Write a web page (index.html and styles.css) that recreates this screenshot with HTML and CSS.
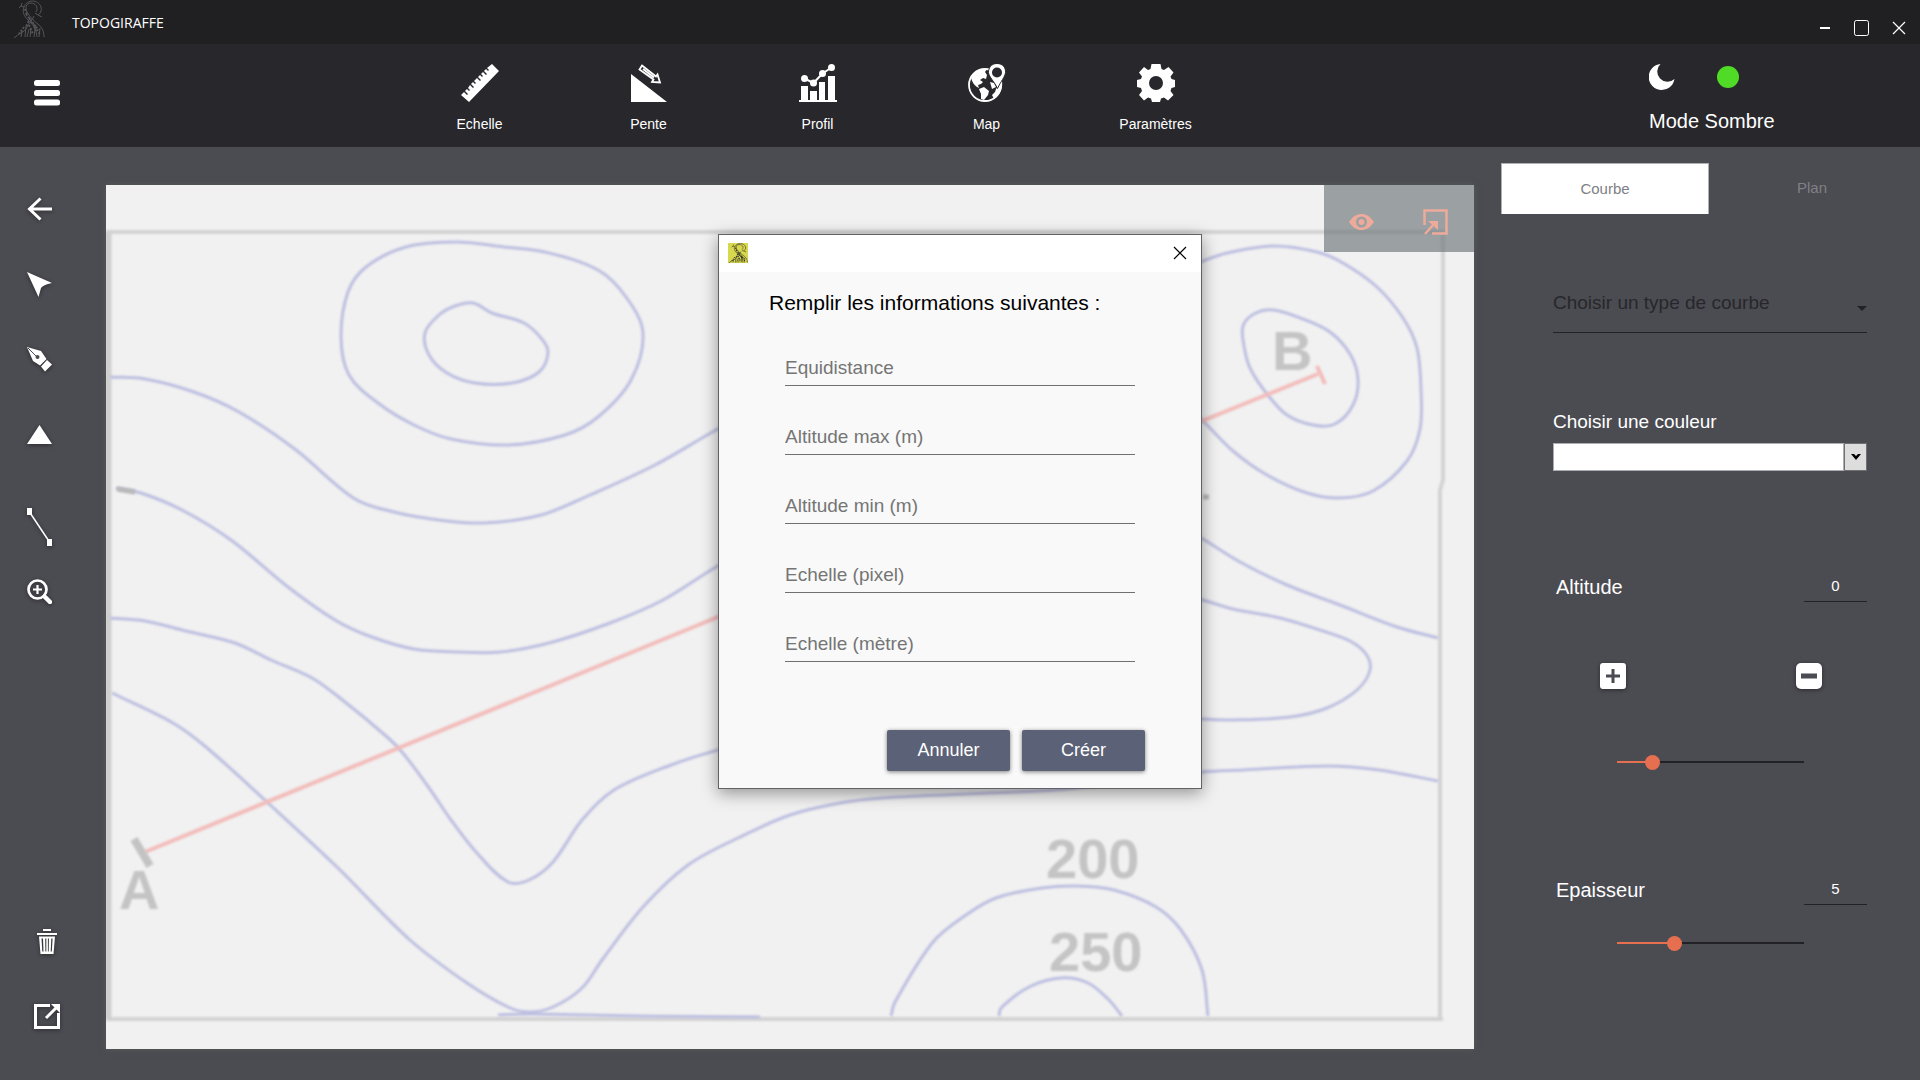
FILE: index.html
```html
<!DOCTYPE html>
<html lang="fr">
<head>
<meta charset="utf-8">
<title>TopoGiraffe</title>
<link rel="stylesheet" href="styles.css">
</head>
<body>
<svg class="defs" width="0" height="0" aria-hidden="true">
  <symbol id="giraffe" viewBox="0 0 32 38">
    <g fill="none" stroke="currentColor" stroke-width="1">
      <path d="M6 8l2-2 1-3M8 6l3 1c-2 5 0 9 4 13 5 5 8 8 9 17M11 7c3-8 14-8 17 0 1 4-1 7-3 8l4 2M25 15l-3-2M23 12c3-5-1-9-5-9-5 0-6 5-4 9 3 5 7 9 12 13 3 3 5 6 5 12"/>
      <path d="M21 16c-2 5-5 7-7 11-1 3-4 5-8 7l-5 4M13 26l-1 11M9 31l-1 6M16 29l-2 8M18 28l-1 9M22 29l-1 8M27 28l-1 9"/>
      <path stroke-width="2" stroke-dasharray="2 1.500" d="M13 14l11 14M17 18l-4 9M11 27l-5 7M16 25l4 9M21 27l6 7M12 9l2 6M18 22l8 8"/>
    </g>
  </symbol>
  <symbol id="close" viewBox="0 0 14 14"><path d="M1 1l12 12M13 1L1 13" fill="none" stroke="currentColor" stroke-width="1.200"/></symbol>
</svg>

<header>
  <div class="titlebar">
    <svg class="logo" width="32" height="38"><use href="#giraffe"/></svg>
    <h1>TOPOGIRAFFE</h1>
    <div class="window-buttons">
      <button type="button" aria-label="Réduire"><svg width="16" height="16" viewBox="0 0 16 16"><path d="M3 8h10" stroke="#fff" stroke-width="2"/></svg></button>
      <button type="button" aria-label="Agrandir"><svg width="16" height="16" viewBox="0 0 16 16"><rect x=".5" y=".5" width="14" height="15" rx="2" fill="none" stroke="#fff"/></svg></button>
      <button type="button" aria-label="Fermer"><svg width="14" height="14"><use href="#close"/></svg></button>
    </div>
  </div>
  <div class="toolbar">
    <button class="menu" type="button" aria-label="Menu"><svg width="26" height="26" viewBox="0 0 26 26"><g fill="#fff"><rect width="26" height="6" rx="2.500"/><rect y="10" width="26" height="6" rx="2.500"/><rect y="19.500" width="26" height="6" rx="2.500"/></g></svg></button>
    <nav>
      <button type="button"><svg width="38" height="38" viewBox="0 0 38 38"><path fill="#fff" d="M31 0l7 7L8 38l-8-7 3-3 3 3 1-1-3-3 2-2 2 2 1-1-2-2 2-3 3 3 1-1-3-3 2-2 2 2 1-1-2-2 3-3 3 3 1-1-3-3 2-2 2 2 1-1-2-2 2-2 3 3 1-1-3-3 2-2 2 2 1-1-2-2z"/></svg>Echelle</button>
      <button type="button"><svg width="38" height="38" viewBox="0 0 38 38"><path fill="#fff" d="M1 10l36 28H1z"/><path fill="none" stroke="#fff" stroke-width="1.800" d="M12 1.500l14 11 1.500-2 2.500 8-8-.5 1.500-2.500-14-10zM13 5l11 8.500"/></svg>Pente</button>
      <button type="button"><svg width="38" height="38" viewBox="0 0 38 38"><g fill="#fff"><path d="M0 36h38v2H0zM2 22h7v14H2zM11 27h7v9h-7zM20 18h6v18h-6zM29 12h7v24h-7z"/><circle cx="5.500" cy="14.500" r="3.500"/><circle cx="14.500" cy="19" r="3.500"/><circle cx="23.500" cy="9.500" r="3.500"/><circle cx="32.500" cy="3.500" r="3.500"/></g><path d="M5.500 14.500l9 4.500 9-9.500 9-6" fill="none" stroke="#fff" stroke-width="2"/></svg>Profil</button>
      <button type="button"><svg width="38" height="38" viewBox="0 0 38 38"><circle cx="17" cy="21" r="16" fill="none" stroke="#fff" stroke-width="1.800"/><path fill="#fff" d="M3 14C6 6 13 4 19 5l-2 3 2 3-1 4-3-1-3 2 3 2-2 2-3 1 1 3c-4-2-6-4-8-10zM11 25l5-2 5 4-1 4-4 5-3-1 0-5zM28 25l6-8c1 8-2 14-8 18l-2-4 3-3zM22 18l4 1 2 4-4 2z"/><path fill="#fff" stroke="#28272c" d="M29-.5c6 0 9 4.500 8.500 9C37 13 33 17 29.500 24.500 26 17 21 13 20.500 8.500 20.500 4 23-.5 29-.5z"/><circle cx="29" cy="8.500" r="5" fill="#28272c"/></svg>Map</button>
      <button type="button"><svg width="38" height="38" viewBox="0 0 38 38"><path fill="#fff" fill-rule="evenodd" d="M14.500 0h9l1 5 2.500 1 4.500-3 5 5.500-3 4 1 2.500 3.500 1v7l-3.500 1-1 3 3 4-5.500 5.500-4-3-3 1-1 3.500h-8l-1-3.500-3-1-4 3L2 31l3-4-1-3-4-1v-7l4-1 1-2.500-3-4L7 3l4 3 2.500-1zM19 12a7 7 0 1 0 0 14 7 7 0 0 0 0-14z"/></svg>Paramètres</button>
    </nav>
    <div class="mode">
      <div class="mode-icons">
        <svg width="26" height="26" viewBox="0 0 26 26"><path fill="#fff" d="M11.500 0A13 13 0 1 0 25.500 15 9.800 9.800 0 0 1 11.500 0z"/></svg>
        <button type="button" class="mode-dot" aria-label="Changer de mode"></button>
      </div>
      <p>Mode Sombre</p>
    </div>
  </div>
</header>

<main>
  <aside class="tools">
    <div class="tool-group">
      <button type="button" aria-label="Retour"><svg width="25" height="24" viewBox="0 0 25 24"><path d="M13.500 1.500L2.500 12l11 10.500M2.500 12H25" fill="none" stroke="#fff" stroke-width="3"/></svg></button>
      <button type="button" aria-label="Sélection"><svg width="25" height="25" viewBox="0 0 25 25"><path fill="#fff" d="M0 0l25 11c-6 1-9 3-11 5l-2.500 9z"/></svg></button>
      <button type="button" aria-label="Plume"><svg width="25" height="25" viewBox="0 0 25 25"><path fill="#fff" d="M0 0l14 4 5.500 8-6.500 6.500L6 14zM20 13l5 4.500-7 7-4-5z"/><path d="M1 1l9 9" stroke="#4b4b52"/><circle cx="10.500" cy="10" r="2" fill="#4b4b52"/></svg></button>
      <button type="button" aria-label="Sommet"><svg width="25" height="19" viewBox="0 0 25 19"><path fill="#fff" d="M12.500 0L25 19H0z"/></svg></button>
    </div>
    <div class="tool-group tight">
      <button type="button" aria-label="Segment"><svg width="25" height="38" viewBox="0 0 25 38"><path d="M2.500 4l20 30" stroke="#fff" stroke-width="1.500"/><path fill="#fff" d="M0 0h5v7H0zM20 31h5v7h-5z"/></svg></button>
      <button type="button" aria-label="Zoom"><svg width="25" height="25" viewBox="0 0 25 25"><g fill="none" stroke="#fff"><circle cx="10.500" cy="10.500" r="9" stroke-width="2.700"/><path d="M6 10.500h9M10.500 6v9" stroke-width="2.200"/><path d="M17.500 17.500l5.500 5.500" stroke-width="4.500" stroke-linecap="round"/></g></svg></button>
    </div>
    <div class="tool-group last">
      <button type="button" aria-label="Supprimer"><svg width="20" height="25" viewBox="0 0 20 25"><path d="M7 2V1h6v1M0 5h20" fill="none" stroke="#fff" stroke-width="2"/><path fill="#fff" fill-rule="evenodd" d="M2 7.500h16L16.500 25h-13zM4.500 9.500l.8 13h1.200l-.5-13zM8.200 9.500l.2 13h.9v-13zM10.900 9.500v13h.8l.2-13zM14.300 9.500l-.6 13h1.100l.8-13z"/></svg></button>
      <button type="button" aria-label="Exporter"><svg width="26" height="25" viewBox="0 0 26 25"><path d="M16 1.500H1.500v22h23V9M12 14L22 4" fill="none" stroke="#fff" stroke-width="3"/><path fill="#fff" d="M17 0h9v9z"/></svg></button>
    </div>
  </aside>

  <section class="canvas">
    <svg class="map" viewBox="106 185 1368 864" role="img" aria-label="Carte topographique">
      <g class="frame">
        <path d="M106 232H1443V480L1440 490V1019M106 1019H1443"/>
        <path class="edge" d="M108 232V1019"/>
      </g>
      <g id="contours" class="contours"></g>
      <path class="blot" d="M117 489l18 3M1203 497h6"/>
      <g class="profile"><path d="M145 852L730 612L1207 419L1318 374M1317 366l8 18"/></g>
      <path class="tick" d="M134 839L150 866"/>
      <g class="labels">
        <text x="119" y="909">A</text>
        <text x="1272" y="370">B</text>
        <text x="1046" y="878">200</text>
        <text x="1049" y="971">250</text>
      </g>
    </svg>
    <div class="map-actions">
      <button type="button" aria-label="Afficher"><svg width="25" height="16" viewBox="0 0 25 16"><path fill="#eeaa9a" fill-rule="evenodd" d="M0 8c4-6 8-8 12.500-8S21 2 25 8c-4 6-8 8-12.500 8S4 14 0 8zM12.500 2.500a5.500 5.500 0 1 0 0 11 5.500 5.500 0 0 0 0-11z"/><circle cx="12.500" cy="8" r="3" fill="#eeaa9a"/></svg></button>
      <button type="button" aria-label="Ajuster"><svg width="25" height="26" viewBox="0 0 25 26"><path d="M1.500 16V1.500h22v23H9M2 25l9-10" fill="none" stroke="#eeaa9a" stroke-width="2.500"/><path fill="#eeaa9a" d="M5 12h10v9z"/></svg></button>
    </div>
  </section>

  <aside class="panel">
    <div class="tabs" role="tablist">
      <button type="button" role="tab" aria-selected="true">Courbe</button>
      <button type="button" role="tab" aria-selected="false">Plan</button>
    </div>
    <div class="settings">
      <div class="picker">
        <select aria-label="Type de courbe"><option>Choisir un type de courbe</option></select>
        <svg width="10" height="5" viewBox="0 0 10 5"><path d="M0 0h10L5 5z" fill="#222226"/></svg>
      </div>
      <label class="color-label" for="color">Choisir une couleur</label>
      <div class="color">
        <select id="color"><option></option></select>
        <span class="color-arrow"><svg width="10" height="6" viewBox="0 0 10 6"><path d="M0 0h3l2 2 2-2h3L5 6z"/></svg></span>
      </div>
      <div class="row altitude"><label for="alt">Altitude</label><input id="alt" type="text" value="0"></div>
      <div class="steps">
        <button type="button" aria-label="Augmenter"><svg width="26" height="26" viewBox="0 0 26 26"><rect width="26" height="26" rx="3" fill="#fff"/><path d="M6 13h14M13 6v14" stroke="#4b4b52" stroke-width="3"/></svg></button>
        <button type="button" aria-label="Diminuer"><svg width="26" height="26" viewBox="0 0 26 26"><rect width="26" height="26" rx="5" fill="#fff"/><path d="M5 13h16" stroke="#4b4b52" stroke-width="5"/></svg></button>
      </div>
      <input class="slider" type="range" aria-label="Altitude" value="16" style="--fill:19%">
      <div class="row thickness"><label for="thick">Epaisseur</label><input id="thick" type="text" value="5"></div>
      <input class="slider short" type="range" aria-label="Epaisseur" value="29" style="--fill:30%">
    </div>
  </aside>
</main>

<div class="overlay">
  <form class="dialog" role="dialog" aria-labelledby="dialog-title">
    <div class="dialog-bar">
      <svg class="dialog-icon" width="20" height="20" viewBox="0 0 32 38" preserveAspectRatio="none"><use href="#giraffe" width="32" height="38"/></svg>
      <button type="button" aria-label="Fermer"><svg width="14" height="14"><use href="#close"/></svg></button>
    </div>
    <h2 id="dialog-title">Remplir les informations suivantes :</h2>
    <div class="fields">
      <input type="text" aria-label="Equidistance" placeholder="Equidistance">
      <input type="text" aria-label="Altitude max (m)" placeholder="Altitude max (m)">
      <input type="text" aria-label="Altitude min (m)" placeholder="Altitude min (m)">
      <input type="text" aria-label="Echelle (pixel)" placeholder="Echelle (pixel)">
      <input type="text" aria-label="Echelle (mètre)" placeholder="Echelle (mètre)">
    </div>
    <div class="dialog-buttons">
      <button type="button">Annuler</button>
      <button type="button">Créer</button>
    </div>
  </form>
</div>
<script src="contours.js"></script>
</body>
</html>
```
FILE: styles.css
```css
* { box-sizing: border-box; }

body {
  margin: 0;
  min-height: 100vh;
  display: flex;
  flex-direction: column;
  background: #4b4b52;
  color: #fff;
  font-family: "Liberation Sans", Arial, sans-serif;
}

button {
  border: 0;
  padding: 0;
  background: none;
  color: inherit;
  font: inherit;
  display: flex;
  align-items: center;
  justify-content: center;
}

svg { display: block; }
h1, h2, p { margin: 0; font-weight: normal; }
.defs { position: absolute; }

/* Header */
.titlebar {
  height: 44px;
  display: flex;
  background: #202022;
  padding-left: 13px;
}
.logo { color: #55555a; }
.titlebar h1 {
  margin-left: 27px;
  font: 14px/46px "Open Sans", sans-serif;
}
.window-buttons {
  margin-left: auto;
  padding: 12px 3px 0 0;
  display: flex;
}
.window-buttons button { width: 37px; height: 32px; }

.toolbar {
  height: 103px;
  display: grid;
  grid-template-columns: 395px 1fr 271px;
  background: #28272c;
}
.menu { align-self: start; justify-self: start; margin: 36px 0 0 34px; }
nav { display: flex; padding-top: 20px; }
nav button {
  width: 169px;
  flex-direction: column;
  justify-content: flex-start;
  gap: 13px;
  font-size: 14px;
  line-height: 18px;
}
.mode-icons { display: flex; align-items: center; gap: 42px; padding-top: 20px; }
.mode-dot { width: 22px; height: 22px; border-radius: 50%; background: #50dc26; }
.mode p { margin-top: 19px; font-size: 20px; line-height: 24px; }

/* Work area */
main {
  flex: 1;
  display: grid;
  grid-template-columns: 106px 1fr 446px;
}
.tools {
  display: flex;
  flex-direction: column;
  padding: 38px 0 40px;
}
.tool-group { display: flex; flex-direction: column; gap: 27px; }
.tool-group button { width: 79px; height: 48px; }
.tight { gap: 16px; margin-top: 45px; }
.last { margin-top: auto; }
.last button { width: 94px; }
.tools svg, .steps svg { filter: drop-shadow(0 1px 2px rgba(0, 0, 0, .45)); }

.canvas { position: relative; padding-top: 38px; }
.map {
  width: 100%;
  height: auto;
  background: #f1f1f1;
  box-shadow: 0 0 6px rgba(90, 100, 90, .8);
}
.map path { fill: none; }
.frame { stroke: #d3d3d3; stroke-width: 4; filter: blur(1px); }
.frame .edge { stroke: #cfcfcf; stroke-width: 7; }
.contours { stroke: #bcbee0; stroke-width: 3; filter: blur(1px); }
.blot { stroke: #b9b9b9; stroke-width: 5; filter: blur(1px); }
.profile { stroke: #f2bcba; stroke-width: 4; filter: blur(1px); }
.tick { stroke: #c3c3c3; stroke-width: 8; filter: blur(1px); }
.labels { fill: #c4c4c4; font-size: 56px; font-weight: bold; filter: blur(1px); }

.map-actions {
  position: absolute;
  top: 38px;
  right: 0;
  width: 150px;
  height: 67px;
  display: flex;
  padding: 6px 2px 0 0;
  background: rgba(113, 121, 124, .68);
}
.map-actions button { flex: 1; }

/* Settings panel */
.panel { padding: 16px 5px 0 27px; }
.tabs { display: flex; }
.tabs button {
  flex: 1;
  height: 51px;
  padding-bottom: 2px;
  color: #808085;
  font-size: 15px;
}
.tabs [aria-selected="true"] {
  background: #fff;
  border: 1px solid #b0b0b4;
  border-bottom: 0;
}
.settings { padding: 59px 48px 0 52px; }
select, .row input, .fields input {
  appearance: none;
  border: 0;
  border-radius: 0;
  padding: 0;
  background: none;
  font-family: inherit;
  outline: 0;
}
.picker { position: relative; }
.picker select {
  display: block;
  width: 100%;
  height: 60px;
  border-bottom: 1px solid #222226;
  color: #27272b;
  font-size: 19px;
}
.picker svg { position: absolute; right: 0; top: 33px; }
.color-label { display: block; margin-top: 77px; font-size: 19px; line-height: 24px; }
.color {
  display: flex;
  height: 28px;
  margin-top: 9px;
}
.color select { flex: 1; background: #fff; border: 1px solid #abadb3; }
.color-arrow {
  width: 23px;
  display: flex;
  align-items: center;
  justify-content: center;
  background: #ddd;
  border: 1px solid #707070;
}
.row {
  display: flex;
  justify-content: space-between;
  align-items: center;
  font-size: 20px;
  padding-left: 3px;
}
.row input {
  width: 63px;
  height: 30px;
  padding-bottom: 2px;
  border-bottom: 1px solid #222226;
  color: #fff;
  font-size: 15px;
  text-align: center;
}
.altitude { margin-top: 101px; }
.thickness { margin-top: 105px; }
.steps { display: flex; justify-content: space-between; padding: 61px 45px 0 47px; }

.slider {
  appearance: none;
  display: block;
  width: 187px;
  height: 16px;
  margin: 65px 0 0 64px;
  background: linear-gradient(to right, #e66f50 var(--fill), #222226 var(--fill)) center / 100% 2px no-repeat;
}
.slider.short { margin-top: 30px; }
.slider::-webkit-slider-thumb {
  appearance: none;
  width: 15px;
  height: 15px;
  border-radius: 50%;
  background: #e66f50;
}

/* Dialog */
.overlay {
  position: absolute;
  inset: 0;
  display: flex;
  justify-content: center;
  align-items: flex-start;
  padding-top: 234px;
}
.dialog {
  width: 484px;
  background: #f9f9f9;
  border: 1px solid #606266;
  box-shadow: 0 4px 16px rgba(0, 0, 0, .4);
  color: #000;
}
.dialog-bar {
  height: 37px;
  display: flex;
  align-items: center;
  justify-content: space-between;
  padding: 0 14px 2px 9px;
  background: #fff;
}
.dialog-icon { background: #d8d84e; color: #33332a; }
.dialog h2 { padding: 19px 50px 0; font-size: 21px; line-height: 24px; }
.fields { display: flex; flex-direction: column; gap: 37px; padding: 39px 66px 0; }
.fields input {
  height: 32px;
  padding-bottom: 3px;
  border-bottom: 1px solid #707070;
  font-size: 19px;
  color: #000;
}
.fields input::placeholder { color: #757575; opacity: 1; }
.dialog-buttons {
  display: flex;
  justify-content: flex-end;
  gap: 12px;
  padding: 68px 56px 17px;
}
.dialog-buttons button {
  width: 123px;
  height: 41px;
  border-radius: 2px;
  background: #5b6277;
  box-shadow: 0 1px 4px rgba(0, 0, 0, .5);
  color: #fff;
  font-size: 18px;
}
```
FILE: contours.js
```js
// Contour lines as survey points; closed ones loop back to their start.
const contours = [
  { closed: true, points: [457,242,504,247,545,252,598,270,626,297,643,333,631,380,598,417,565,435,508,445,451,439,414,425,378,403,349,375,341,337,348,292,366,267,406,247] },
  { closed: true, points: [473,303,492,313,524,323,541,338,548,352,539,372,512,383,475,383,447,373,429,355,425,333,439,315,455,306] },
  { points: [110,377,145,379,194,392,239,412,296,450,355,499,394,512,439,520,484,523,541,515,590,495,655,465,716,430,740,418] },
  { points: [116,488,141,493,182,510,231,540,288,587,335,620,369,636,414,649,459,652,500,652,549,643,610,623,663,600,716,567,740,555] },
  { points: [110,618,145,621,186,631,235,643,271,660,312,678,345,702,386,736,402,752,427,785,451,820,476,852,508,882,529,880,553,862,582,820,614,790,671,765,718,750,740,745] },
  { points: [112,693,173,723,206,747,267,802,337,867,410,940,467,983,508,1007,529,1012,553,1007,582,988,602,960,643,907,688,865,740,837,790,815,840,803,882,798,966,794,1067,789,1202,772,1244,770,1328,766,1379,770,1438,781] },
  { points: [1180,270,1203,261,1227,253,1273,246,1317,252,1343,263,1377,287,1403,318,1417,348,1421,390,1420,429,1407,461,1373,491,1340,498,1307,493,1267,475,1233,451,1203,421,1180,400] },
  { closed: true, points: [1243,326,1254,314,1273,310,1303,319,1330,332,1350,354,1358,379,1353,405,1335,424,1313,425,1287,415,1267,394,1250,368,1244,346] },
  { points: [1180,526,1203,539,1240,562,1287,585,1340,605,1397,627,1438,638] },
  { points: [1180,594,1203,600,1233,609,1280,618,1323,631,1350,641,1366,654,1370,670,1357,690,1327,708,1290,717,1233,720,1203,719,1180,716] },
  { points: [891,1016,895,1002,933,942,966,915,996,898,1042,888,1076,886,1114,890,1156,907,1181,930,1202,970,1208,1016] },
  { points: [999,1016,1001,1008,1029,987,1061,978,1088,983,1109,1000,1122,1016] },
  { points: [498,1015,530,1014,640,1016,760,1017] }
];

// Smooth curve through the points: each tangent follows its neighbours,
// and each handle is a third of its own segment.
function spline(flat, closed) {
  const pts = [];
  for (let i = 0; i < flat.length; i += 2) pts.push([flat[i], flat[i + 1]]);
  const n = pts.length;
  const at = i => closed ? pts[(i + n) % n] : pts[Math.max(0, Math.min(n - 1, i))];
  const direction = i => {
    const [a, b] = [at(i - 1), at(i + 1)];
    const length = Math.hypot(b[0] - a[0], b[1] - a[1]);
    return [(b[0] - a[0]) / length, (b[1] - a[1]) / length];
  };
  let d = `M${pts[0]}`;
  for (let i = 0; i < (closed ? n : n - 1); i++) {
    const [p, q] = [at(i), at(i + 1)];
    const [s, t] = [direction(i), direction(i + 1)];
    const h = Math.hypot(q[0] - p[0], q[1] - p[1]) / 3;
    d += `C${p[0] + s[0] * h},${p[1] + s[1] * h} ${q[0] - t[0] * h},${q[1] - t[1] * h} ${q}`;
  }
  return d;
}

const layer = document.getElementById("contours");
for (const line of contours) {
  const path = document.createElementNS("http://www.w3.org/2000/svg", "path");
  path.setAttribute("d", spline(line.points, line.closed));
  layer.append(path);
}
```
